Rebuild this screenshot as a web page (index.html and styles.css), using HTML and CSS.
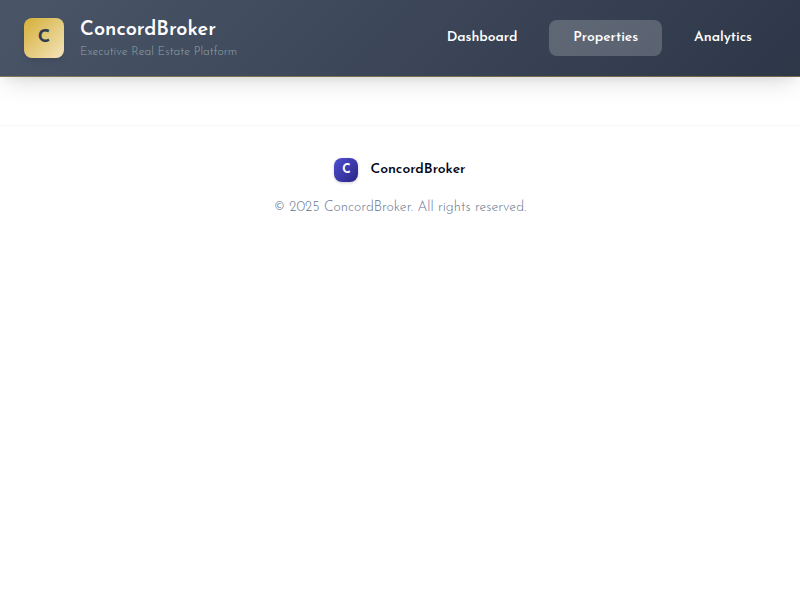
FILE: index.html
```html
<!DOCTYPE html>
<html lang="en">
<head>
<meta charset="utf-8">
<title>ConcordBroker</title>
<link rel="stylesheet" href="styles.css">
</head>
<body>
<header class="header">
  <div class="brand">
    <div class="logo">C</div>
    <div class="brand-text">
      <div class="brand-name">ConcordBroker</div>
      <div class="tagline">Executive Real Estate Platform</div>
    </div>
  </div>
  <nav class="nav">
    <a class="link">Dashboard</a>
    <a class="link active">Properties</a>
    <a class="link">Analytics</a>
  </nav>
</header>
<footer class="footer">
  <div class="footer-brand">
    <div class="footer-logo">C</div>
    <span class="footer-name">ConcordBroker</span>
  </div>
  <p class="copyright">© 2025 ConcordBroker. All rights reserved.</p>
</footer>
</body>
</html>
```
FILE: styles.css
```css
* { box-sizing: border-box; }
body {
  margin: 0;
  background: #fff;
  font-family: "Josefin Sans", Lato, sans-serif;
  white-space: nowrap;
}
.header {
  height: 77px;
  padding: 0 24px;
  display: flex;
  align-items: center;
  justify-content: space-between;
  background: linear-gradient(135deg, #4a5568 0%, #2d3748 100%);
  border-bottom: 1px solid rgba(212, 175, 55, 0.4);
  box-shadow: 0 10px 25px -5px rgba(0, 0, 0, 0.13), 0 8px 10px -6px rgba(0, 0, 0, 0.05);
}
.brand { display: flex; gap: 16px; align-items: center; }
.logo {
  width: 40px;
  height: 40px;
  border-radius: 8px;
  background: linear-gradient(135deg, #d4af37, #f4e4bc);
  box-shadow: 0 4px 6px -1px rgba(0, 0, 0, 0.1);
  color: #2c3e50;
  font-size: 18px;
  font-weight: 700;
  line-height: 40px;
  text-align: center;
}
.brand-name {
  color: #fff;
  font-size: 20px;
  font-weight: 600;
  line-height: 24px;
  padding-top: 2px;
}
.tagline {
  color: #95a5a6;
  font-size: 12px;
  font-weight: 300;
  line-height: 16px;
  margin-top: 2px;
}
.nav { display: flex; gap: 8px; }
.link {
  height: 36px;
  padding: 0 24px;
  border-radius: 8px;
  color: #fff;
  font-size: 14px;
  font-weight: 600;
  letter-spacing: -0.05px;
  line-height: 35px;
}
.active { background: rgba(255, 255, 255, 0.2); }
.footer {
  margin-top: 48px;
  border-top: 1px solid #f7f7f7;
  padding-top: 32px;
}
.footer-brand {
  height: 24px;
  display: flex;
  justify-content: center;
  gap: 12px;
}
.footer-logo {
  width: 24px;
  height: 24px;
  border-radius: 8px;
  background: linear-gradient(135deg, #4f4fcf, #2a2486);
  box-shadow: 0 1px 3px rgba(0, 0, 0, 0.2);
  color: #fff;
  font-size: 12px;
  font-weight: 700;
  line-height: 25px;
  text-align: center;
}
.footer-name {
  color: #020617;
  font-size: 14px;
  font-weight: 600;
  line-height: 24px;
}
.copyright {
  margin: 16px 0 0;
  color: #64748b;
  font-size: 14px;
  font-weight: 300;
  line-height: 20px;
  text-align: center;
}
```
